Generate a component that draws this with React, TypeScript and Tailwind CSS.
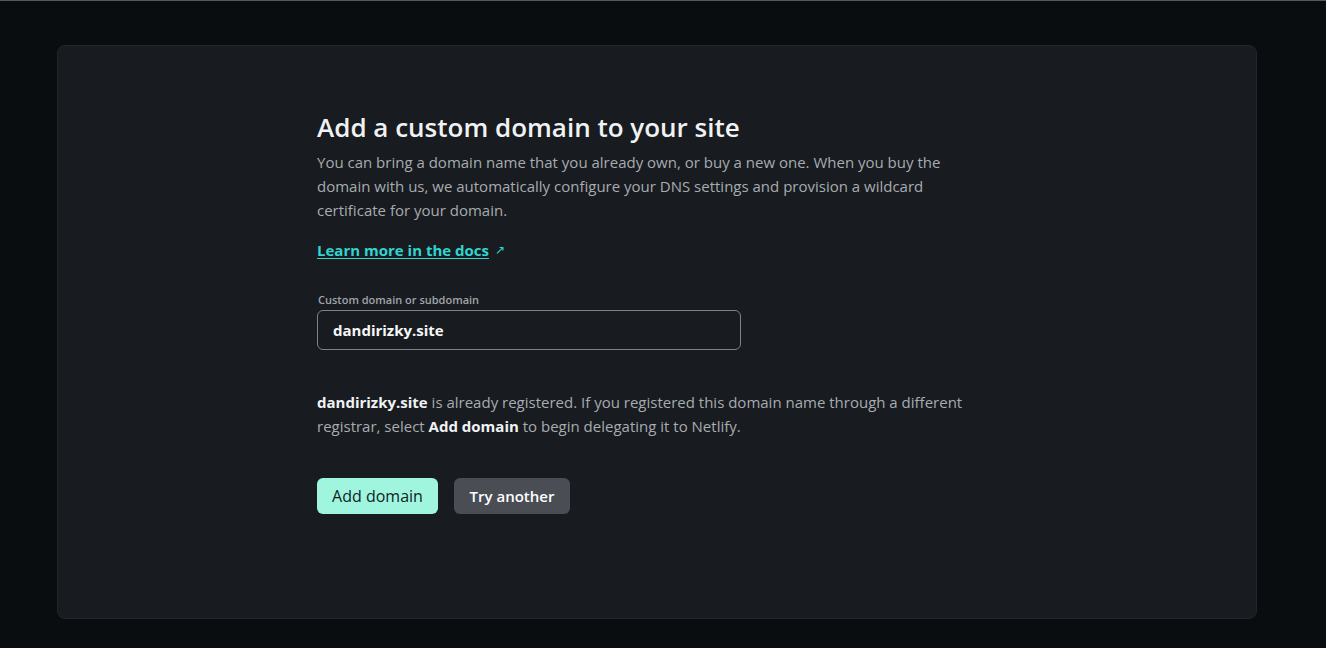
import React from "react";

const App = () => {
  return (
    <div
      className="min-h-screen w-full bg-[#0a0d10] border-t border-[#55585c] pt-[44px] px-[57px]"
      style={{ fontFamily: '"Open Sans", "Noto Sans", sans-serif' }}
    >
      <div className="h-[574px] w-[1200px] rounded-lg border border-[#22262b] bg-[#181b1f] pl-[259px] pt-[64px]">
        <div className="w-[660px]">
          <h1 className="text-[26px] leading-[34px] font-semibold text-[#f0f2f3]">
            Add a custom domain to your site
          </h1>
          <p className="mt-[6px] text-[15px] leading-6 text-[#a7acb1]">
            You can bring a domain name that you already own, or buy a new one. When you buy the
            domain with us, we automatically configure your DNS settings and provision a wildcard
            certificate for your domain.
          </p>
          <div className="mt-[16px] flex items-center gap-[6px]">
            <a
              href="#"
              className="text-[15px] leading-6 font-bold text-[#32d4cf] underline underline-offset-2"
            >
              Learn more in the docs
            </a>
            <span className="text-[12px] text-[#32d4cf]">↗</span>
          </div>
          <label className="mt-[30px] block pl-[1px] text-[11px] leading-4 font-semibold text-[#a0a5aa]">
            Custom domain or subdomain
          </label>
          <div className="mt-[2px] flex h-[40px] w-[424px] items-center rounded-md border border-[#7e8389] px-[15px] text-[15px] font-bold text-[#f6f7f8]">
            dandirizky.site
          </div>
          <p className="mt-[40px] text-[15px] leading-6 text-[#a7acb1]">
            <span className="font-bold text-[#f0f2f3]">dandirizky.site</span> is already registered. If
            you registered this domain name through a different registrar, select{" "}
            <span className="font-bold text-[#f0f2f3]">Add domain</span> to begin delegating it to
            Netlify.
          </p>
          <div className="mt-[40px] flex gap-4">
            <button className="h-9 w-[121px] rounded-md bg-[#a0f5df] text-[16px] text-[#0e1e25]">
              Add domain
            </button>
            <button className="h-9 w-[116px] rounded-md bg-[#4a4d53] text-[15px] font-semibold text-white">
              Try another
            </button>
          </div>
        </div>
      </div>
    </div>
  );
};

export default App;
